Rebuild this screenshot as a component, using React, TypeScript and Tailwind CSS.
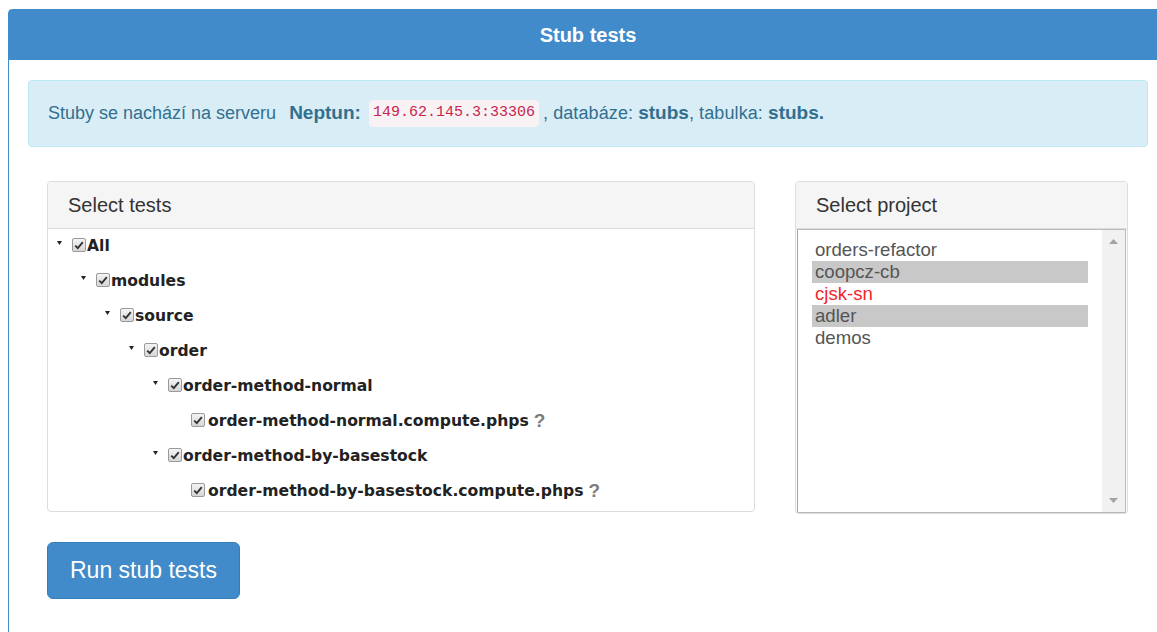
import type { ReactNode } from 'react';

type TreeNode = {
    label: string;
    depth: number;
    leaf?: boolean;
};

const treeNodes: TreeNode[] = [
    { label: 'All', depth: 0 },
    { label: 'modules', depth: 1 },
    { label: 'source', depth: 2 },
    { label: 'order', depth: 3 },
    { label: 'order-method-normal', depth: 4 },
    { label: 'order-method-normal.compute.phps', depth: 5, leaf: true },
    { label: 'order-method-by-basestock', depth: 4 },
    { label: 'order-method-by-basestock.compute.phps', depth: 5, leaf: true },
];

const projects = [
    { name: 'orders-refactor', selected: false, failing: false },
    { name: 'coopcz-cb', selected: true, failing: false },
    { name: 'cjsk-sn', selected: false, failing: true },
    { name: 'adler', selected: true, failing: false },
    { name: 'demos', selected: false, failing: false },
];

function Caret() {
    return (
        <svg width="5" height="4" viewBox="0 0 5 4" className="mb-[7px] shrink-0">
            <path d="M0 0 L5 0 L2.5 4 Z" fill="#222" />
        </svg>
    );
}

function CheckBox() {
    return (
        <span className="mb-[3px] flex h-[14px] w-[14px] shrink-0 items-center justify-center rounded-[2px] border border-[#9a9a9a] bg-gradient-to-b from-[#f4f4f4] to-[#d6d6d6]">
            <svg width="10" height="9" viewBox="0 0 10 9">
                <path d="M1.2 4.6 L3.8 7.2 L8.8 1.2" fill="none" stroke="#333" strokeWidth="1.9" />
            </svg>
        </span>
    );
}

function PanelHeading({ children }: { children: ReactNode }) {
    return (
        <div className="flex h-[47px] items-center border-b border-[#ddd] bg-[#f5f5f5] pl-[20px] text-[20px] text-[#333]">
            {children}
        </div>
    );
}

export default function App() {
    return (
        <div className="h-[632px] w-[1157px] overflow-hidden bg-white font-['Liberation_Sans',Arial,sans-serif]">
            <div className="ml-[8px] mt-[9px] h-[700px] w-[1160px] rounded-t-[4px] border border-[#428bca]">
                <div className="flex h-[50px] items-center justify-center bg-[#428bca] text-[20px] font-bold text-white">
                    Stub tests
                </div>

                <div className="px-[19px] pt-[20px]">
                    <div className="flex h-[67px] items-center rounded-[4px] border border-[#bce8f1] bg-[#d9edf7] pl-[19px] text-[18px] text-[#31708f]">
                        <span>Stuby se nachází na serveru</span>
                        <b className="ml-[13px] text-[19px]">Neptun:</b>
                        <code className="ml-[8px] mr-[4px] rounded-[4px] bg-[#f9f2f4] px-[4px] py-[2px] font-['Liberation_Mono',monospace] text-[15px] text-[#c7254e]">
                            149.62.145.3:33306
                        </code>
                        <span className="tracking-[0.1px]">, databáze:&nbsp;</span>
                        <b className="text-[19px]">stubs</b>
                        <span className="tracking-[0.1px]">, tabulka:&nbsp;</span>
                        <b className="text-[19px]">stubs.</b>
                    </div>

                    <div className="flex gap-[40px] pl-[19px] pt-[34px]">
                        {/* test tree */}
                        <div className="h-[331px] w-[708px] overflow-hidden rounded-[4px] border border-[#ddd] bg-white">
                            <PanelHeading>Select tests</PanelHeading>
                            <div className="font-['DejaVu_Sans',Verdana,sans-serif] text-[15.6px] font-bold text-[#222]">
                                {treeNodes.map((node) => (
                                    <div
                                        key={node.label}
                                        className="flex h-[35px] items-center"
                                        style={{ paddingLeft: 9 + node.depth * 24 + (node.leaf ? 14 : 0) }}
                                    >
                                        {node.leaf ? null : <Caret />}
                                        <span className={node.leaf ? 'flex' : 'ml-[10px] flex'}>
                                            <CheckBox />
                                        </span>
                                        <span className={node.leaf ? 'ml-[3px]' : 'ml-[1px]'}>{node.label}</span>
                                        {node.leaf && (
                                            <span className="ml-[5px] font-['Liberation_Sans',Arial,sans-serif] text-[19px] text-[#7d7d7d]">
                                                ?
                                            </span>
                                        )}
                                    </div>
                                ))}
                            </div>
                        </div>

                        {/* project list */}
                        <div className="h-[333px] w-[333px] overflow-hidden rounded-[4px] border border-[#ddd] bg-white">
                            <PanelHeading>Select project</PanelHeading>
                            <div className="mx-[1px] flex h-[284px] border border-[#b9b9b9] border-l-[#a5a5a5] bg-white">
                                <div className="flex-1 pl-[14px] pr-[14px] pt-[9px] text-[18.6px] leading-[22px] text-[#555]">
                                    {projects.map((p) => (
                                        <div
                                            key={p.name}
                                            className={`h-[22px] pl-[3px] ${p.selected ? 'bg-[#c8c8c8]' : ''} ${p.failing ? 'text-[#f2262b]' : ''}`}
                                        >
                                            {p.name}
                                        </div>
                                    ))}
                                </div>
                                <div className="flex w-[23px] flex-col items-center justify-between bg-[#f1f1f1] py-[9px]">
                                    <svg width="9" height="5" viewBox="0 0 9 5">
                                        <path d="M0 5 L4.5 0 L9 5 Z" fill="#a3a3a3" />
                                    </svg>
                                    <svg width="9" height="5" viewBox="0 0 9 5">
                                        <path d="M0 0 L9 0 L4.5 5 Z" fill="#a3a3a3" />
                                    </svg>
                                </div>
                            </div>
                        </div>
                    </div>

                    <div className="pl-[19px] pt-[28px]">
                        <button
                            type="button"
                            className="h-[57px] w-[193px] rounded-[6px] border border-[#357ebd] bg-[#428bca] text-[23px] text-white"
                        >
                            Run stub tests
                        </button>
                    </div>
                </div>
            </div>
        </div>
    );
}
